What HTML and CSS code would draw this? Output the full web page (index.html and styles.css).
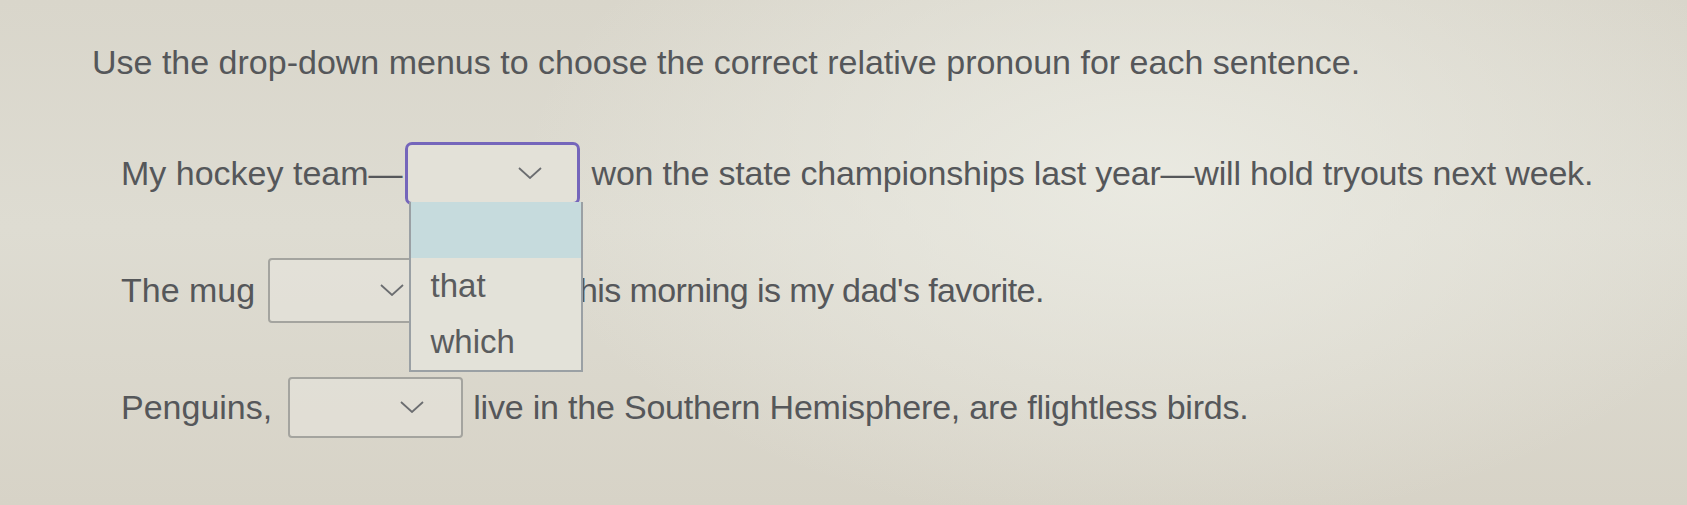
FILE: index.html
```html
<!DOCTYPE html>
<html lang="en">
<head>
<meta charset="utf-8">
<title>Relative pronouns</title>
<link rel="stylesheet" href="styles.css">
</head>
<body>
<main class="page">
  <p class="prompt">Use the drop-down menus to choose the correct relative pronoun for each sentence.</p>

  <div class="questions">
    <div class="row">
      <span class="text">My hockey team—</span>
      <div class="select select-open">
        <svg class="chev" viewBox="0 0 24 12" aria-hidden="true"><polyline points="1,1 12,11 23,1"/></svg>
        <ul class="menu">
          <li class="menu-item menu-item-active">&nbsp;</li>
          <li class="menu-item">that</li>
          <li class="menu-item">which</li>
        </ul>
      </div>
      <span class="text text-after">won the state championships last year—will hold tryouts next week.</span>
    </div>

    <div class="row">
      <span class="text">The mug</span>
      <div class="select select-mug">
        <svg class="chev" viewBox="0 0 24 12" aria-hidden="true"><polyline points="1,1 12,11 23,1"/></svg>
      </div>
      <span class="text text-after-tight">I bought this morning is my dad's favorite.</span>
    </div>

    <div class="row">
      <span class="text">Penguins,</span>
      <div class="select select-penguins">
        <svg class="chev" viewBox="0 0 24 12" aria-hidden="true"><polyline points="1,1 12,11 23,1"/></svg>
      </div>
      <span class="text text-after-narrow">live in the Southern Hemisphere, are flightless birds.</span>
    </div>
  </div>
</main>
</body>
</html>
```
FILE: styles.css
```css
html, body {
  margin: 0;
  padding: 0;
}

body {
  width: 1687px;
  height: 505px;
  overflow: hidden;
  font-family: "Liberation Sans", Arial, sans-serif;
  color: #55575a;
  background:
    radial-gradient(ellipse 900px 500px at 1150px 180px, rgba(236, 236, 228, 0.85), rgba(236, 236, 228, 0) 70%),
    linear-gradient(180deg, #d9d6cb 0%, #dedcd2 45%, #d7d3c7 100%);
}

.page {
  padding: 43px 0 0 92px;
}

.prompt {
  margin: 0;
  font-size: 34px;
  line-height: 38px;
}

.questions {
  display: flex;
  flex-direction: column;
  gap: 54px;
  margin-top: 61px;
  padding-left: 29px;
}

.row {
  display: flex;
  align-items: center;
  height: 63px;
  font-size: 34px;
}

.text {
  white-space: nowrap;
}

.text-after {
  margin-left: 12px;
  letter-spacing: -0.2px;
}

.text-after-tight {
  margin-left: 0;
  letter-spacing: -0.6px;
}

.text-after-narrow {
  margin-left: 10px;
  letter-spacing: -0.2px;
}

.select {
  position: relative;
  box-sizing: border-box;
  width: 175px;
  height: 63px;
  border: 2px solid #a4a49f;
  border-radius: 4px;
  background: rgba(232, 230, 222, 0.55);
  flex: none;
}

.select-open {
  margin-left: 2px;
  border: 3px solid #7566bb;
  border-radius: 7px;
  background: #e3e1d8;
}

.select-mug {
  height: 65px;
  margin-left: 13px;
}

.select-penguins {
  height: 61px;
  margin-left: 16px;
}

.chev {
  position: absolute;
  left: 110px;
  top: 50%;
  width: 24px;
  height: 12px;
  margin-top: -7px;
  fill: none;
  stroke: #6b6d70;
  stroke-width: 1.8;
}

/* open option list hangs below the first select, over the next row */
.menu {
  position: absolute;
  z-index: 2;
  top: 100%;
  left: 1px;
  box-sizing: border-box;
  width: 174px;
  margin: 0;
  padding: 0;
  list-style: none;
  background: #e3e2d9;
  border: 2px solid #9aa0a4;
  border-top: 0;
}

.menu-item {
  height: 56px;
  padding-left: 20px;
  font-size: 33px;
  line-height: 56px;
  color: #5a5c5e;
}

.menu-item-active {
  background: #c6dbdd;
}
```
